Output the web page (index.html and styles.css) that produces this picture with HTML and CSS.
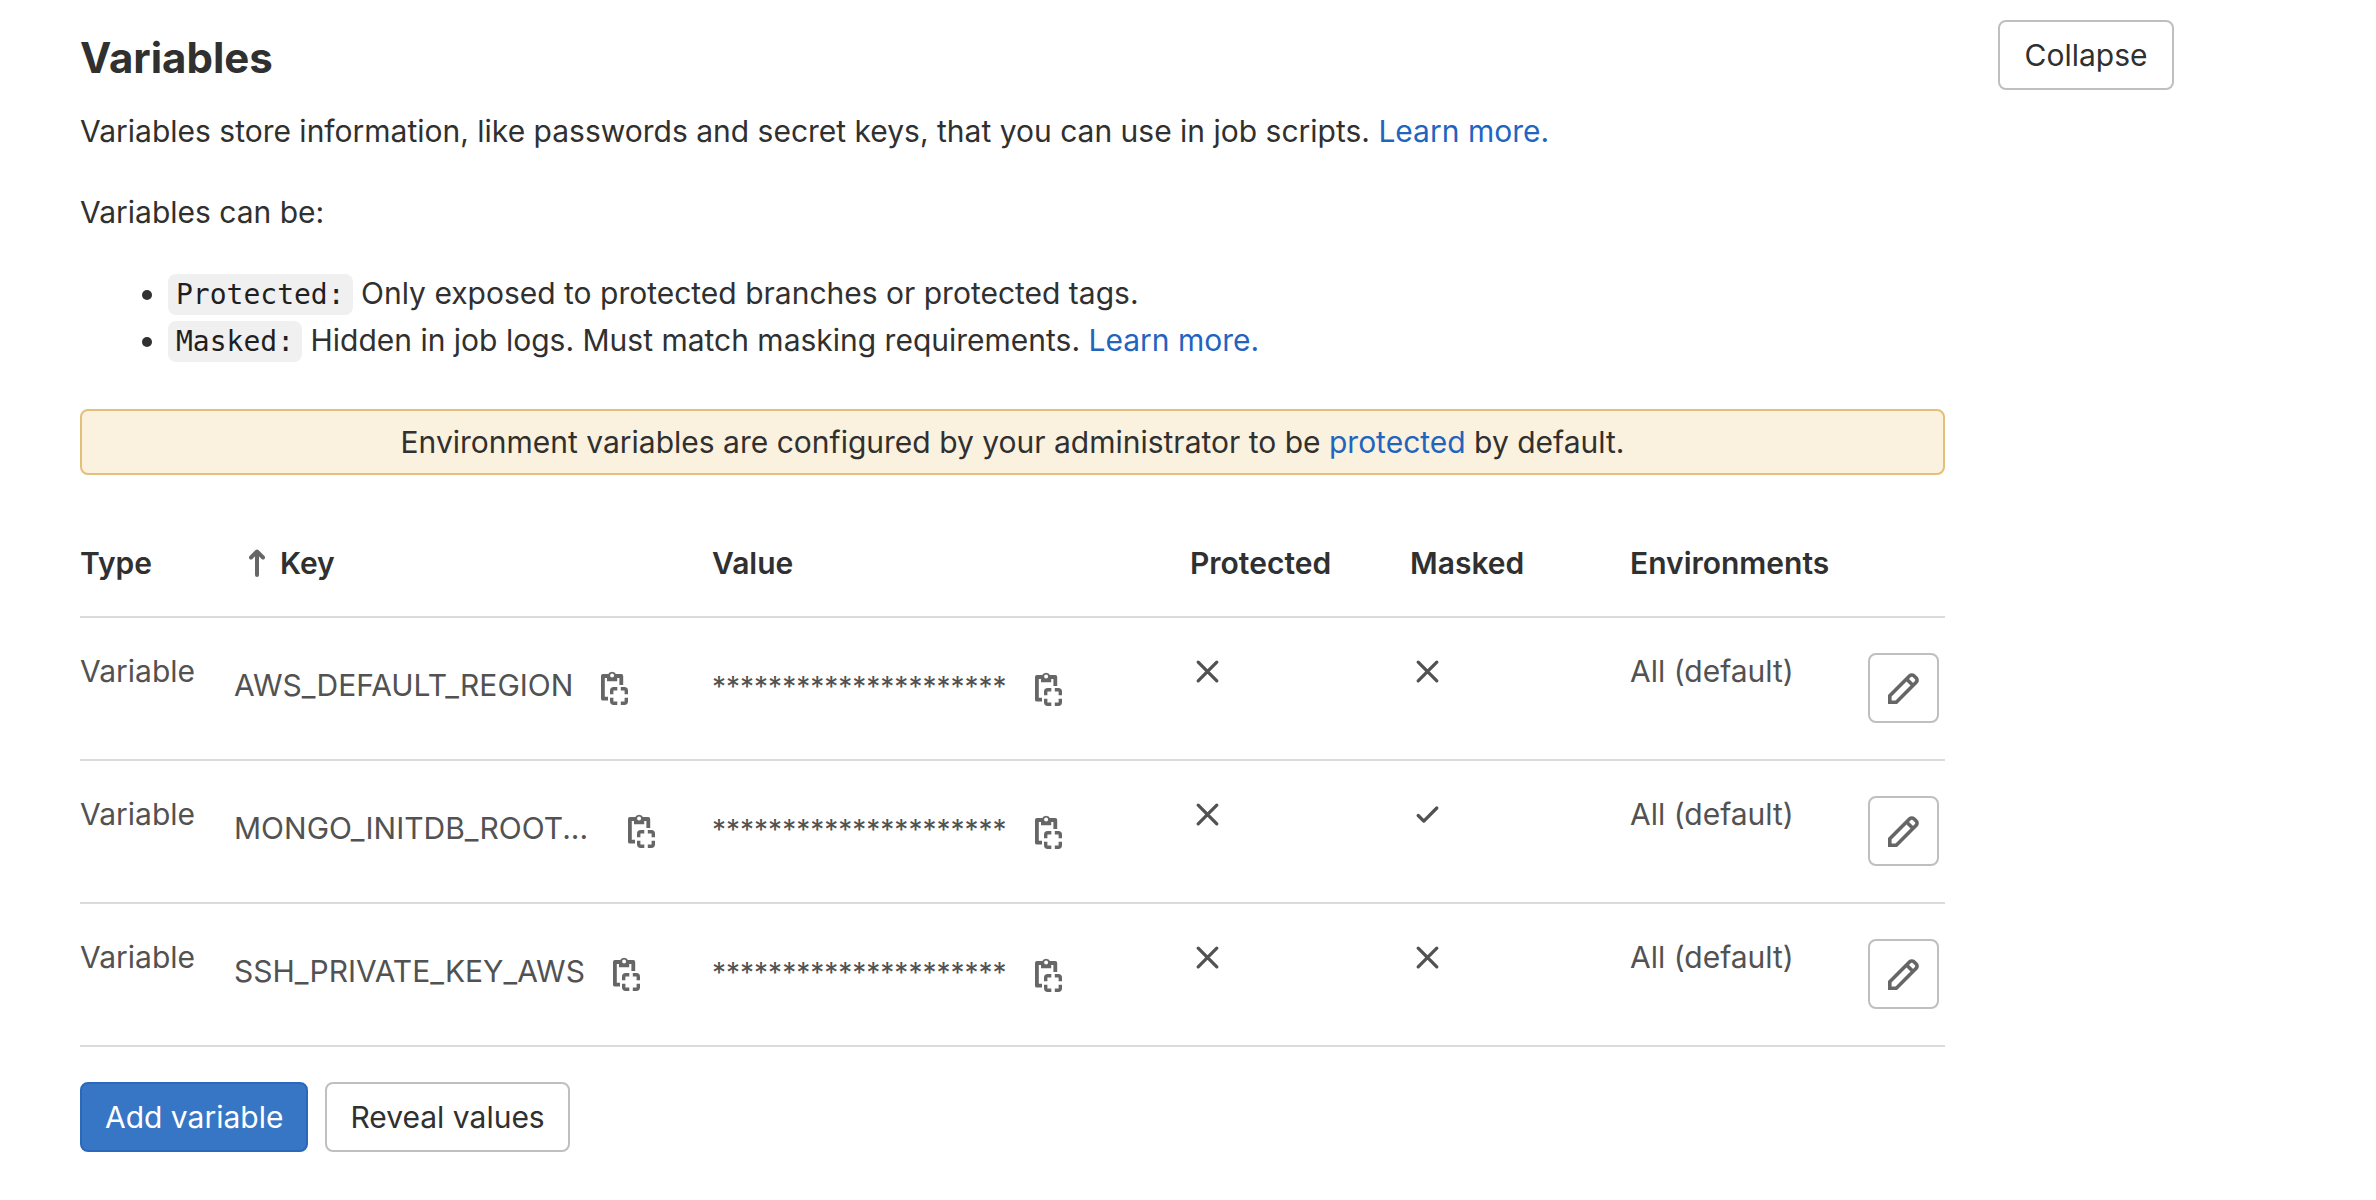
FILE: index.html
```html
<!DOCTYPE html>
<html lang="en">
<head>
<meta charset="utf-8">
<meta name="viewport" content="width=device-width, initial-scale=1">
<title>Variables</title>
<link rel="stylesheet" href="styles.css">
</head>
<body>
<svg class="sprite" aria-hidden="true">
  <symbol id="icon-copy" viewBox="0 0 27 35">
    <path fill="none" stroke="currentColor" stroke-width="3.8" stroke-linejoin="round" d="M7 28.7H1.9V6H7M15 6h5.3v9"/>
    <path fill="currentColor" fill-rule="evenodd" d="M6 4.4h.9a4.7 4.7 0 0 1 8.4 0h.9v6.8H6zM11.100 3.600a2 2 0 1 0 0 4 2 2 0 1 0 0-4z"/>
    <path fill="none" stroke="currentColor" stroke-width="3.4" stroke-linecap="butt" d="M10.700 24.300v-3.600a2 2 0 0 1 2-2h3.600M19.800 18.700h3.500a2 2 0 0 1 2 2v3.600M25.300 27.800v3.500a2 2 0 0 1-2 2h-3.500M16.300 33.300h-3.600a2 2 0 0 1-2-2v-3.500"/>
  </symbol>
  <symbol id="icon-pencil" viewBox="0 0 31 31">
    <path fill="none" stroke="currentColor" stroke-width="3.600" d="M1.800 29.200v-6.500L21.700 2.800a3 3 0 0 1 4.200 0l2.300 2.300a3 3 0 0 1 0 4.200l-19.900 19.900zM18.500 6l6.600 6.600"/>
  </symbol>
  <symbol id="icon-close" viewBox="0 0 35 35">
    <path fill="none" stroke="currentColor" stroke-width="3.300" stroke-linecap="round" d="M8.200 8.200l18.600 18.600M26.800 8.200L8.200 26.800"/>
  </symbol>
  <symbol id="icon-check" viewBox="0 0 35 35">
    <path fill="none" stroke="currentColor" stroke-width="3.300" stroke-linecap="round" stroke-linejoin="round" d="M8.200 18.500l5.600 5.600L26.800 11"/>
  </symbol>
  <symbol id="icon-arrow-up" viewBox="0 0 16 28">
    <path fill="none" stroke="currentColor" stroke-width="4" stroke-linecap="round" stroke-linejoin="round" d="M8 26V3M2 8.500l6-6 6 6"/>
  </symbol>
</svg>

<main class="settings">
  <section class="content">
    <h2 class="title">Variables</h2>
    <p class="text">Variables store information, like passwords and secret keys, that you can use in job scripts. <a href="#learn">Learn more.</a></p>
    <p class="text">Variables can be:</p>
    <ul class="list">
      <li><code>Protected:</code> Only exposed to protected branches or protected tags.</li>
      <li><code>Masked:</code> Hidden in job logs. Must match masking requirements. <a href="#masking">Learn more.</a></li>
    </ul>
    <p class="notice">Environment variables are configured by your administrator to be <a href="#protected">protected</a> by default.</p>

    <table class="table">
      <colgroup>
        <col class="col-type"><col><col><col class="col-flag"><col class="col-flag"><col class="col-env"><col class="col-edit">
      </colgroup>
      <thead>
        <tr>
          <th scope="col">Type</th>
          <th scope="col" aria-sort="ascending"><span class="sort"><svg class="icon-arrow"><use href="#icon-arrow-up"/></svg>Key</span></th>
          <th scope="col">Value</th>
          <th scope="col">Protected</th>
          <th scope="col">Masked</th>
          <th scope="col">Environments</th>
          <td></td>
        </tr>
      </thead>
      <tbody>
        <tr>
          <td>Variable</td>
          <td><div class="copyable"><span class="key">AWS_DEFAULT_REGION</span><button class="copy" type="button" aria-label="Copy key"><svg><use href="#icon-copy"/></svg></button></div></td>
          <td><div class="copyable"><span class="secret">*********************</span><button class="copy" type="button" aria-label="Copy value"><svg><use href="#icon-copy"/></svg></button></div></td>
          <td><svg class="flag" role="img" aria-label="No"><use href="#icon-close"/></svg></td>
          <td><svg class="flag" role="img" aria-label="No"><use href="#icon-close"/></svg></td>
          <td>All (default)</td>
          <td class="edit-cell"><button class="btn btn-icon" type="button" aria-label="Edit"><svg><use href="#icon-pencil"/></svg></button></td>
        </tr>
        <tr>
          <td>Variable</td>
          <td><div class="copyable"><span class="key key-cut">MONGO_INITDB_ROOT...</span><button class="copy" type="button" aria-label="Copy key"><svg><use href="#icon-copy"/></svg></button></div></td>
          <td><div class="copyable"><span class="secret">*********************</span><button class="copy" type="button" aria-label="Copy value"><svg><use href="#icon-copy"/></svg></button></div></td>
          <td><svg class="flag" role="img" aria-label="No"><use href="#icon-close"/></svg></td>
          <td><svg class="flag" role="img" aria-label="Yes"><use href="#icon-check"/></svg></td>
          <td>All (default)</td>
          <td class="edit-cell"><button class="btn btn-icon" type="button" aria-label="Edit"><svg><use href="#icon-pencil"/></svg></button></td>
        </tr>
        <tr>
          <td>Variable</td>
          <td><div class="copyable"><span class="key">SSH_PRIVATE_KEY_AWS</span><button class="copy" type="button" aria-label="Copy key"><svg><use href="#icon-copy"/></svg></button></div></td>
          <td><div class="copyable"><span class="secret">*********************</span><button class="copy" type="button" aria-label="Copy value"><svg><use href="#icon-copy"/></svg></button></div></td>
          <td><svg class="flag" role="img" aria-label="No"><use href="#icon-close"/></svg></td>
          <td><svg class="flag" role="img" aria-label="No"><use href="#icon-close"/></svg></td>
          <td>All (default)</td>
          <td class="edit-cell"><button class="btn btn-icon" type="button" aria-label="Edit"><svg><use href="#icon-pencil"/></svg></button></td>
        </tr>
      </tbody>
    </table>

    <div class="actions">
      <button class="btn btn-primary" type="button">Add variable</button>
      <button class="btn" type="button">Reveal values</button>
    </div>
  </section>
  <button class="btn btn-collapse" type="button">Collapse</button>
</main>
</body>
</html>
```
FILE: styles.css
```css
* {
  box-sizing: border-box;
}

body {
  margin: 0;
  background: #fff;
  color: #303030;
  font-family: Inter, "Liberation Sans", sans-serif;
  font-size: 30px;
  line-height: 46px;
}

a {
  color: #1f65bf;
  text-decoration: none;
}

.sprite {
  position: absolute;
  width: 0;
  height: 0;
}

.settings {
  display: grid;
  grid-template-columns: minmax(0, 1fr) auto;
  align-items: start;
  column-gap: 53px;
  padding: 20px 202px 48px 80px;
}

.title {
  margin: 10px 0 22px;
  font-size: 42px;
  font-weight: 700;
  line-height: 56px;
}

.text {
  margin: 0 0 35px;
}

.list {
  margin: 0 0 45px;
  padding-left: 88px;
  line-height: 47px;
}

code {
  padding: 4px 8px;
  border-radius: 8px;
  background: #f0f0f0;
  color: #1f1f1f;
  font-family: "DejaVu Sans Mono", monospace;
  font-size: 28px;
  line-height: 1;
}

.notice {
  margin: 0 0 35px;
  padding: 8px;
  border: 2px solid #e4bf7a;
  border-radius: 8px;
  background: #faf1de;
  text-align: center;
}

.table {
  width: 100%;
  table-layout: fixed;
  border-spacing: 0;
}

.col-type {
  width: 154px;
}

.col-flag {
  width: 220px;
}

.col-env {
  width: 238px;
}

.col-edit {
  width: 77px;
}

th,
td {
  padding: 30px 0;
  border-bottom: 2px solid #dbdbdb;
  text-align: left;
  vertical-align: top;
  white-space: nowrap;
}

th {
  font-weight: 600;
}

tbody td {
  color: #525252;
}

.sort {
  display: flex;
  align-items: center;
  gap: 15px;
  padding-left: 15px;
}

.icon-arrow {
  width: 16px;
  height: 28px;
  color: #666;
}

.copyable {
  display: flex;
  align-items: center;
  gap: 28px;
  padding-top: 14px;
}

.key-cut {
  width: 366px;
}

.secret {
  padding-top: 2px;
  font-size: 28px;
}

.copy {
  padding: 4px 0 0;
  border: 0;
  background: none;
  color: #666;
}

.copy svg {
  display: block;
  width: 27px;
  height: 35px;
}

.flag {
  display: block;
  width: 35px;
  height: 35px;
  margin-top: 6px;
}

.btn {
  height: 70px;
  padding: 0 23px;
  border: 2px solid #bfbfbf;
  border-radius: 8px;
  background: #fff;
  color: #303030;
  font: inherit;
}

.btn-primary {
  border-color: #2b68bb;
  background: #3775c5;
  color: #fff;
}

.btn-collapse {
  min-width: 176px;
}

tbody .edit-cell {
  padding: 35px 0 36px;
}

.btn-icon {
  display: grid;
  place-items: center;
  width: 71px;
  padding: 0;
  color: #666;
}

.btn-icon svg {
  width: 31px;
  height: 31px;
}

.actions {
  display: flex;
  gap: 17px;
  margin-top: 35px;
}
```
